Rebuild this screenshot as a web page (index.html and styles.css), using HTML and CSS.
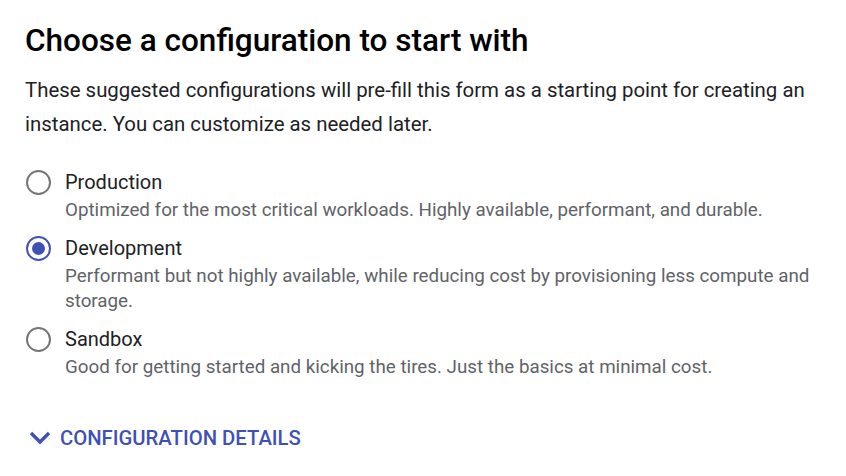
FILE: index.html
```html
<!DOCTYPE html>
<html>
<head>
<meta charset="utf-8">
<link rel="stylesheet" href="styles.css">
</head>
<body>
<div class="page">
  <h1 class="title">Choose a configuration to start with</h1>
  <p class="intro">These suggested configurations will pre-fill this form as a starting point for creating an instance. You can customize as needed later.</p>
  <div class="options">
    <div class="option">
      <span class="radio"></span>
      <div class="text">
        <div class="label">Production</div>
        <div class="desc">Optimized for the most critical workloads. Highly available, performant, and durable.</div>
      </div>
    </div>
    <div class="option">
      <span class="radio checked"></span>
      <div class="text">
        <div class="label">Development</div>
        <div class="desc">Performant but not highly available, while reducing cost by provisioning less compute and storage.</div>
      </div>
    </div>
    <div class="option">
      <span class="radio"></span>
      <div class="text">
        <div class="label">Sandbox</div>
        <div class="desc">Good for getting started and kicking the tires. Just the basics at minimal cost.</div>
      </div>
    </div>
  </div>
  <div class="details">
    <svg class="chev" width="22" height="14" viewBox="0 0 22 14"><polyline points="2,2 11,11 20,2" fill="none" stroke="#3f51b5" stroke-width="3.4"/></svg>
    <span>CONFIGURATION DETAILS</span>
  </div>
</div>
</body>
</html>
```

FILE: styles.css
```css
html, body {
  margin: 0;
  padding: 0;
  background: #ffffff;
}
.page {
  font-family: Roboto, "Noto Sans", sans-serif;
  padding: 24px 25px 0 25px;
  color: #202124;
}
.title {
  margin: 0;
  font-size: 31.5px;
  font-weight: 500;
  line-height: 34px;
  color: #000;
}
.intro {
  margin: 15px 0 0 0;
  font-size: 20.4px;
  line-height: 34px;
  color: #202124;
  max-width: 810px;
}
.options {
  margin-top: 27px;
  display: flex;
  flex-direction: column;
  gap: 11px;
}
.option {
  display: flex;
  align-items: flex-start;
}
.radio {
  box-sizing: border-box;
  width: 25px;
  height: 25px;
  border-radius: 50%;
  border: 2.5px solid #757575;
  margin: 2px 14px 0 1px;
  flex: none;
  display: flex;
  align-items: center;
  justify-content: center;
}
.radio.checked {
  border-color: #3f51b5;
}
.radio.checked::after {
  content: "";
  width: 13px;
  height: 13px;
  border-radius: 50%;
  background: #3f51b5;
}
.label {
  font-size: 20px;
  line-height: 28px;
  color: #202124;
}
.desc {
  margin-top: 2px;
  font-size: 18.8px;
  line-height: 25px;
  color: #5f6368;
}
.details {
  margin-top: 46px;
  display: flex;
  align-items: center;
  gap: 9px;
  padding-left: 4px;
  color: #3f51b5;
  font-size: 20.3px;
  font-weight: 500;
  line-height: 24px;
}
.chev {
  flex: none;
}
```
